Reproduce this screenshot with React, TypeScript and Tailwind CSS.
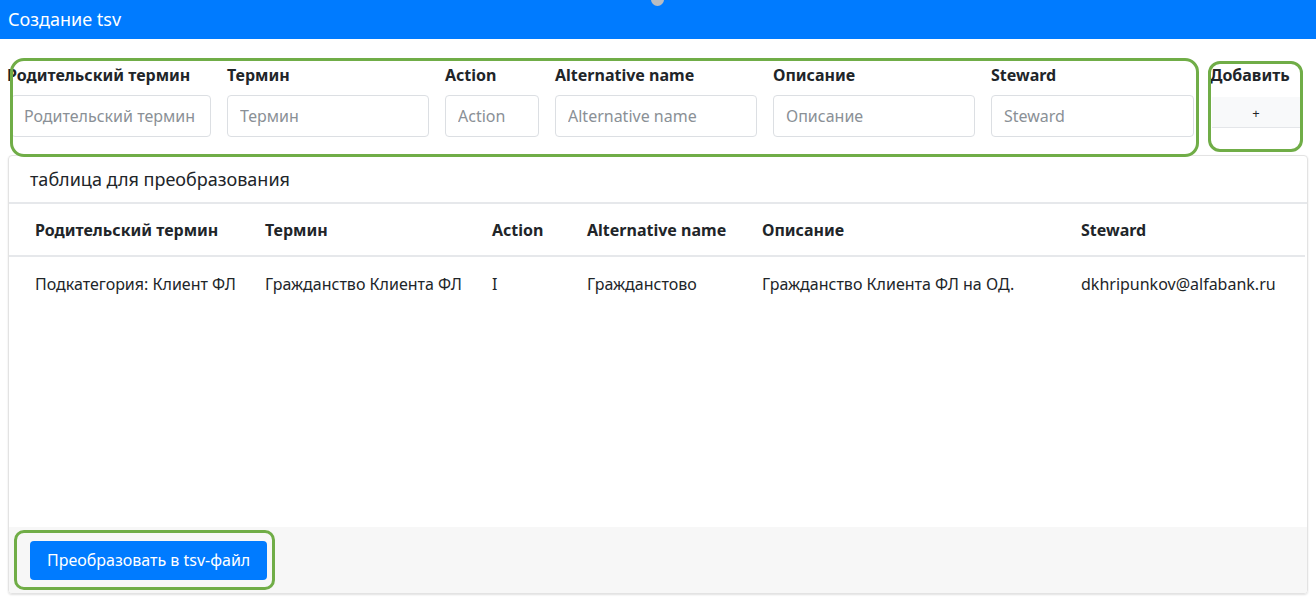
import React from 'react';

const fields = [
    { label: 'Родительский термин', w: 'w-[200px]', shift: true },
    { label: 'Термин', w: 'w-[202px]' },
    { label: 'Action', w: 'w-[94px]' },
    { label: 'Alternative name', w: 'w-[202px]' },
    { label: 'Описание', w: 'w-[202px]' },
    { label: 'Steward', w: 'w-[203px]' },
];

const columns = [
    { title: 'Родительский термин', w: 'w-[244px]', pad: 'pl-[26px]' },
    { title: 'Термин', w: 'w-[227px]', pad: 'pl-[12px]' },
    { title: 'Action', w: 'w-[95px]', pad: 'pl-[12px]' },
    { title: 'Alternative name', w: 'w-[175px]', pad: 'pl-[12px]' },
    { title: 'Описание', w: 'w-[319px]', pad: 'pl-[12px]' },
    { title: 'Steward', w: 'w-[236px]', pad: 'pl-[12px]' },
];

const rows = [
    ['Подкатегория: Клиент ФЛ', 'Гражданство Клиента ФЛ', 'I', 'Гражданстово', 'Гражданство Клиента ФЛ на ОД.', 'dkhripunkov@alfabank.ru'],
];

export default function App() {
    return (
        <div className="relative w-[1316px] h-[616px] overflow-hidden bg-white text-[#212529]" style={{ fontFamily: '"Noto Sans", "Open Sans", sans-serif' }}>
            {/* Navbar */}
            <div className="relative h-[39px] bg-[#007bff] flex items-center px-2">
                <span className="text-white text-[18px]">Создание tsv</span>
                <div className="absolute left-[651px] -top-[7px] w-[13px] h-[13px] rounded-full bg-[#b8bcc2]" />
            </div>

            {/* Input row */}
            <div className="flex items-start pl-2 pt-[24px] gap-4">
                {fields.map((f) => (
                    <div key={f.label} className="flex flex-col">
                        <label className={`text-[16px] font-bold leading-6 mb-2 whitespace-nowrap ${f.shift ? '-ml-[1px]' : ''}`}>{f.label}</label>
                        <input
                            placeholder={f.label}
                            className={`${f.w} ${f.shift ? 'ml-[3px]' : ''} h-[42px] px-3 text-[16px] border border-[#dcdfe3] rounded-[4px] placeholder:text-[#8a9096] outline-none`}
                        />
                    </div>
                ))}
                <div className="flex flex-col">
                    <label className="text-[16px] font-bold leading-6 mb-[10px] whitespace-nowrap">Добавить</label>
                    <button className="ml-[2px] w-[88px] h-[31px] bg-[#f8f9fa] border-b border-[#e4e6e9] text-[13px] text-[#212529] pt-[3px]">+</button>
                </div>
            </div>

            {/* Card */}
            <div className="mx-2 mt-[18px] h-[439px] border border-[#e3e3e3] rounded-[4px] shadow-[0_1px_2px_rgba(0,0,0,0.12)] flex flex-col overflow-hidden">
                <div className="h-[48px] border-b-2 border-[#e6e8eb] flex items-center pl-[21px] text-[18px]">таблица для преобразования</div>
                <div className="flex-1 bg-white">
                    <table className="table-fixed border-collapse text-[16px]">
                        <thead>
                            <tr className="h-[52px] border-b-2 border-[#e6e8eb]">
                                {columns.map((c) => (
                                    <th key={c.title} className={`${c.w} ${c.pad} text-left font-bold whitespace-nowrap`}>{c.title}</th>
                                ))}
                            </tr>
                        </thead>
                        <tbody>
                            {rows.map((r, i) => (
                                <tr key={i} className="h-[55px]">
                                    {r.map((v, j) => (
                                        <td key={j} className={`${columns[j].pad} whitespace-nowrap`}>{v}</td>
                                    ))}
                                </tr>
                            ))}
                        </tbody>
                    </table>
                </div>
                <div className="h-[66px] bg-[#f7f7f7] flex items-center pl-[21px]">
                    <button className="h-[39px] px-[17px] bg-[#007bff] text-white text-[16px] rounded-[4px]">Преобразовать в tsv-файл</button>
                </div>
            </div>

            {/* Green annotation outlines */}
            <div className="absolute left-[10px] top-[58px] w-[1189px] h-[99px] border-[3px] border-[#70ad47] rounded-[14px] pointer-events-none" />
            <div className="absolute left-[1208px] top-[61px] w-[95px] h-[91px] border-[3px] border-[#70ad47] rounded-[12px] pointer-events-none" />
            <div className="absolute left-[14px] top-[530px] w-[261px] h-[60px] border-[3px] border-[#70ad47] rounded-[10px] pointer-events-none" />
        </div>
    );
}
